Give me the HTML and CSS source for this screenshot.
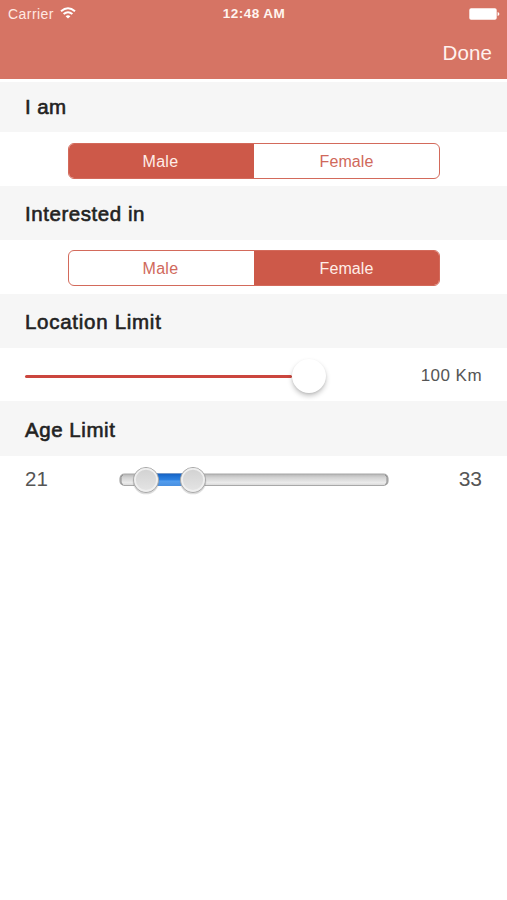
FILE: index.html
```html
<!DOCTYPE html>
<html lang="en">
<head>
<meta charset="utf-8">
<title>Settings</title>
<link rel="stylesheet" href="styles.css">
</head>
<body>
<header class="top">
  <div class="status">
    <div class="carrier"><span>Carrier</span>
      <svg class="wifi" width="16" height="12" viewBox="0 0 16 12" fill="none" stroke="#fff" stroke-width="2"><path d="M1 4.3Q8-1.7 15 4.3M3.6 7.1Q8 3.3 12.4 7.1"/><path d="M5.6 9.2Q8 7.2 10.4 9.2L8 11.6Z" fill="#fff" stroke="none"/></svg>
    </div>
    <div class="time">12:48 AM</div>
    <div class="power"><svg width="31" height="12" viewBox="0 0 31 12" fill="#fff"><rect x=".3" y=".3" width="27.4" height="11.4" rx="1.8"/><path d="M28.6 4Q30.4 4.3 30.4 6T28.6 8Z"/></svg></div>
  </div>
  <div class="nav"><span class="done">Done</span></div>
</header>
<main>
  <h2 class="heading first"><span class="iam">I am</span></h2>
  <section class="row choice first-choice">
    <div class="segments"><div class="segment on"><span class="male">Male</span></div><div class="segment"><span>Female</span></div></div>
  </section>
  <h2 class="heading"><span class="interest">Interested in</span></h2>
  <section class="row choice">
    <div class="segments"><div class="segment"><span class="male">Male</span></div><div class="segment on"><span>Female</span></div></div>
  </section>
  <h2 class="heading"><span class="location">Location Limit</span></h2>
  <section class="row distance">
    <div class="slider"><div class="line"></div><div class="knob"></div></div>
    <span class="km">100 Km</span>
  </section>
  <h2 class="heading last"><span class="age">Age Limit</span></h2>
  <section class="row ages">
    <span class="num">21</span>
    <svg class="range" width="272" height="32" viewBox="0 0 272 32">
      <defs>
        <linearGradient id="track" x2="0" y2="1"><stop stop-color="#b5b5b5"/><stop offset=".3" stop-color="#d2d2d2"/><stop offset=".75" stop-color="#ebebeb"/><stop offset="1" stop-color="#d8d8d8"/></linearGradient>
        <linearGradient id="fill" x2="0" y2="1"><stop stop-color="#1560c0"/><stop offset=".25" stop-color="#1f72d4"/><stop offset=".5" stop-color="#2c80e0"/><stop offset=".6" stop-color="#539def"/><stop offset="1" stop-color="#4a90e0"/></linearGradient>
        <linearGradient id="thumb" x2="0" y2="1"><stop stop-color="#d2d2d2"/><stop offset="1" stop-color="#e4e4e4"/></linearGradient>
      </defs>
      <rect x="2" y="10" width="268" height="11.5" rx="4.5" fill="url(#track)" stroke="#a8a8a8" stroke-width="1.2"/>
      <path d="M5 11Q3 11.5 3 13.5V18Q3 20 5 20.5M267 11Q269 11.5 269 13.500V18Q269 20 267 20.500" fill="none" stroke="#8c8c8c" stroke-width="1"/>
      <rect x="28" y="9.500" width="46" height="12.500" fill="url(#fill)"/>
      <g fill="url(#thumb)">
        <circle cx="28" cy="17" r="13.300" fill="#777" opacity=".25"/><circle cx="28" cy="16" r="12.500" stroke="#a8a8a8"/><circle cx="28" cy="15.800" r="11" stroke="#efefef" stroke-width="1.700"/>
        <circle cx="75" cy="17" r="13.300" fill="#777" opacity=".25"/><circle cx="75" cy="16" r="12.500" stroke="#a8a8a8"/><circle cx="75" cy="15.800" r="11" stroke="#efefef" stroke-width="1.700"/>
      </g>
    </svg>
    <span class="num end">33</span>
  </section>
</main>
</body>
</html>
```
FILE: styles.css
```css
* { box-sizing: border-box; }
body { margin: 0; min-height: 900px; background: #fff; font-family: "Liberation Sans", Arial, sans-serif; color: #555; }
.top { height: 79px; background: #d67464; color: #fff; }
.status { height: 27px; display: grid; grid-template-columns: 1fr auto 1fr; align-items: center; padding: 1px 7px 0 8px; font-size: 14px; line-height: 26px; }
.carrier { display: flex; align-items: center; gap: 6px; letter-spacing: .45px; color: #ffe9e3; }
.wifi { margin-top: -2px; }
.time { font-size: 13.5px; font-weight: 700; letter-spacing: .45px; color: #fff4ef; }
.power { display: flex; justify-content: flex-end; }
.nav { display: flex; justify-content: flex-end; padding: 14px 15px 0 0; line-height: 24px; }
.done { font-size: 20.5px; letter-spacing: .1px; color: #fff2ee; }
.heading { height: 54px; margin: 0; padding: 2px 25px 0; display: flex; align-items: center; background: #f6f6f6; color: #222; font-size: 20.5px; font-weight: 400; -webkit-text-stroke: .6px #222; letter-spacing: .55px; }
.heading.first { height: 50px; margin-top: 3px; padding-top: 0; }
.heading.last { height: 55px; padding-top: 2px; }
.location { letter-spacing: .72px; }
.iam { letter-spacing: .4px; }
.row { height: 54px; }
.choice { padding: 10px 67px 0 68px; }
.first-choice { padding-top: 11px; }
.segments { display: flex; width: 372px; height: 36px; border: 1.5px solid #d36a5b; border-radius: 6px; overflow: hidden; }
.segment { flex: 1; display: flex; align-items: center; justify-content: center; padding-top: 1px; color: #d0695b; font-size: 16px; letter-spacing: .1px; }
.male { letter-spacing: .3px; margin-right: 2px; }
.segment.on { background: #cd5949; color: #ffede8; }
.distance { height: 53px; display: flex; align-items: center; justify-content: space-between; padding: 2px 25px 0; }
.slider { display: flex; align-items: center; width: 302px; }
.line { width: 267px; height: 3px; margin-top: 2px; border-radius: 2px; background: #cb463e; }
.knob { width: 34px; height: 34px; border-radius: 50%; background: #fff; box-shadow: 0 3px 5px rgba(0,0,0,.22), 0 1px 2px rgba(0,0,0,.08); }
.km { font-size: 17px; letter-spacing: .45px; }
.ages { display: flex; padding: 8px 25px 0; }
.num { width: 93px; font-size: 20.5px; line-height: 30px; }
.end { margin-left: auto; width: auto; font-size: 21px; }
```
